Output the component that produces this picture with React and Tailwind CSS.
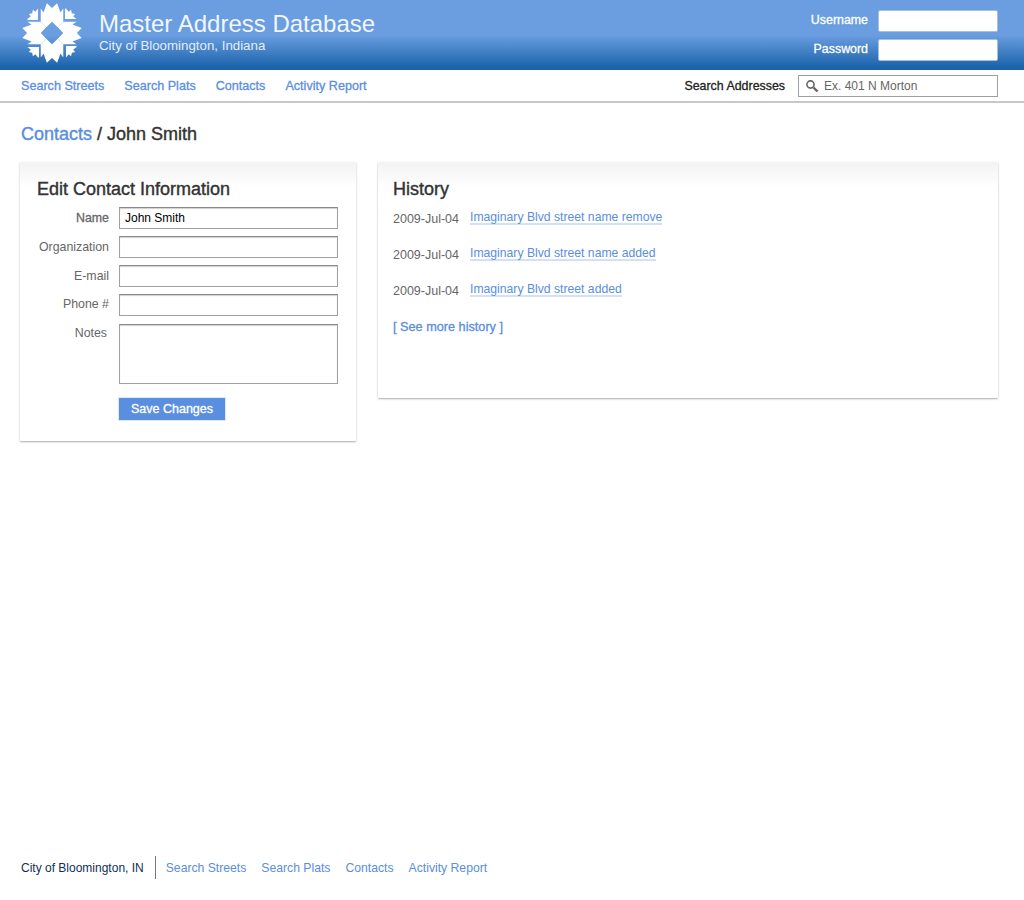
const navLinks = ["Search Streets", "Search Plats", "Contacts", "Activity Report"];

const history = [
  "Imaginary Blvd street name remove",
  "Imaginary Blvd street name added",
  "Imaginary Blvd street added",
];

const fields = ["Name", "Organization", "E-mail", "Phone #"];

function Logo() {
  const arm = "-33,-72 -25,-60 -15,-87 0,-73 15,-87 25,-60 33,-72 33,-33 17,-17 0,-33 -17,-17 -33,-33";
  const corner = "-41,-38 -41,-72 -49,-62 -56,-68 -58,-58 -68,-56 -62,-49 -72,-41 -72,-38";
  return (
    <svg width="60" height="60" viewBox="-88 -88 176 176" className="shrink-0 mb-[4px]">
      {[0, 90, 180, 270].map((r) => (
        <g key={r} transform={`rotate(${r})`} fill="#fff">
          <polygon points={arm} />
          <polygon points={corner} />
        </g>
      ))}
    </svg>
  );
}

function TextBox({ className = "" }) {
  return (
    <div className={`w-[219px] bg-white border border-[#a0a0a0] border-t-[#8a8a8a] shadow-[inset_0_1px_1px_#d0d0d0] ${className}`} />
  );
}

export default function App() {
  return (
    <div className="min-h-[900px] flex flex-col bg-white font-['Liberation_Sans',Arial,sans-serif] text-[#333]">
      {/* Header */}
      <div className="h-[70px] pl-[22px] pr-[26px] flex items-center bg-[linear-gradient(#6a9ee0_0%,#6a9ee0_50%,#1a62aa_97%)]">
        <Logo />
        <div className="ml-[17px] -mt-[8px] text-white">
          <div className="text-[24px] leading-[28px] text-[#f2f6fc]">Master Address Database</div>
          <div className="text-[13.3px] leading-[15px] text-[#e4edf9]">City of Bloomington, Indiana</div>
        </div>
        <div className="ml-auto flex flex-col gap-[7px] text-white text-[12.4px] [-webkit-text-stroke:0.3px]">
          {["Username", "Password"].map((label) => (
            <div key={label} className="flex items-center justify-end gap-[10px]">
              <span className="-mt-[1px]">{label}</span>
              <div className="w-[120px] h-[22px] bg-white border border-[#a9c0dc] rounded-[2px]" />
            </div>
          ))}
        </div>
      </div>

      {/* Nav */}
      <div className="h-[33px] pl-[21px] pr-[26px] flex items-center border-b-2 border-[#c8c8c8]">
        <div className="mt-[2px] flex gap-[20px] text-[12.6px] text-[#5a8ede] [-webkit-text-stroke:0.3px]">
          {navLinks.map((l) => (
            <a key={l}>{l}</a>
          ))}
        </div>
        <span className="ml-auto mt-[2px] text-[12.4px] text-[#222] [-webkit-text-stroke:0.3px]">Search Addresses</span>
        <div className="ml-[13px] w-[200px] h-[22px] flex items-center gap-[5px] pl-[6px] border border-[#a0a0a0] text-[12px] text-[#666]">
          <svg width="14" height="14" viewBox="0 0 14 14" fill="none" stroke="#666">
            <circle cx="5.5" cy="5.5" r="3.6" strokeWidth="1.6" />
            <path d="M8.5 8.5 L12.5 12.5" strokeWidth="2.4" />
          </svg>
          <span>Ex. 401 N Morton</span>
        </div>
      </div>

      {/* Title */}
      <h1 className="mt-[19px] ml-[21px] text-[18px] leading-[24px] [-webkit-text-stroke:0.4px]">
        <a className="text-[#5a8ede]">Contacts</a> / John Smith
      </h1>

      {/* Panels */}
      <div className="mt-[16px] px-[20px] flex items-start gap-[22px] pr-[26px]">
        <div className="w-[336px] h-[279px] pt-[16px] pl-[17px] rounded-[1px] bg-[linear-gradient(#f3f3f3,#fff_26px)] shadow-[0_1px_2px_#aaa]">
          <h2 className="text-[18px] leading-[22px] text-[#333] [-webkit-text-stroke:0.4px]">Edit Contact Information</h2>
          <div className="mt-[7px] flex flex-col gap-[7px] text-[12.35px] text-[#666]">
            {fields.map((f, i) => (
              <div key={f} className="flex items-center">
                <label className={`w-[72px] text-right ${i === 0 ? "[-webkit-text-stroke:0.3px]" : ""} ${i === 3 ? "mb-[2px]" : ""}`}>{f}</label>
                {i === 0 ? (
                  <div className="ml-[10px] w-[219px] h-[22px] px-[5px] flex items-center text-[12px] text-black bg-white border border-[#a0a0a0] border-t-[#8a8a8a] shadow-[inset_0_1px_1px_#d0d0d0]">
                    John Smith
                  </div>
                ) : (
                  <TextBox className="ml-[10px] h-[22px]" />
                )}
              </div>
            ))}
            <div className="mt-[1px] flex items-start">
              <label className="w-[70px] mr-[2px] text-right">Notes</label>
              <TextBox className="ml-[10px] h-[60px]" />
            </div>
          </div>
          <button className="mt-[13px] ml-[81px] w-[108px] h-[24px] block bg-[#5a8ede] text-white text-[12.5px] [-webkit-text-stroke:0.3px] border border-[#dce7f7]">
            Save Changes
          </button>
        </div>

        <div className="w-[620px] h-[236px] pt-[16px] pl-[15px] rounded-[1px] bg-[linear-gradient(#f3f3f3,#fff_26px)] shadow-[0_1px_2px_#aaa]">
          <h2 className="text-[18px] leading-[22px] text-[#333] [-webkit-text-stroke:0.4px]">History</h2>
          <div className="mt-[8px] flex flex-col gap-[20px]">
            {history.map((h) => (
              <div key={h} className="flex items-start h-[16px]">
                <span className="w-[77px] mt-[2px] text-[12.5px] text-[#666]">2009-Jul-04</span>
                <a className="mt-[3px] text-[12.2px] text-[#5a8ede] leading-[12px] border-b-2 border-[#d3e0f6]">{h}</a>
              </div>
            ))}
          </div>
          <a className="block mt-[22px] text-[12.7px] text-[#5a8ede] [-webkit-text-stroke:0.3px]">[ See more history ]</a>
        </div>
      </div>

      {/* Footer */}
      <div className="mt-auto mb-[21px] ml-[21px] flex items-center text-[12.2px]">
        <span className="text-[12px] text-[#0f2f57] pr-[11px] pt-[1px] border-r border-[#777] leading-[22px]">City of Bloomington, IN</span>
        <div className="mt-[2px] ml-[10px] flex gap-[15px] text-[#5a8ede]">
          {navLinks.map((l) => (
            <a key={l}>{l}</a>
          ))}
        </div>
      </div>
    </div>
  );
}
